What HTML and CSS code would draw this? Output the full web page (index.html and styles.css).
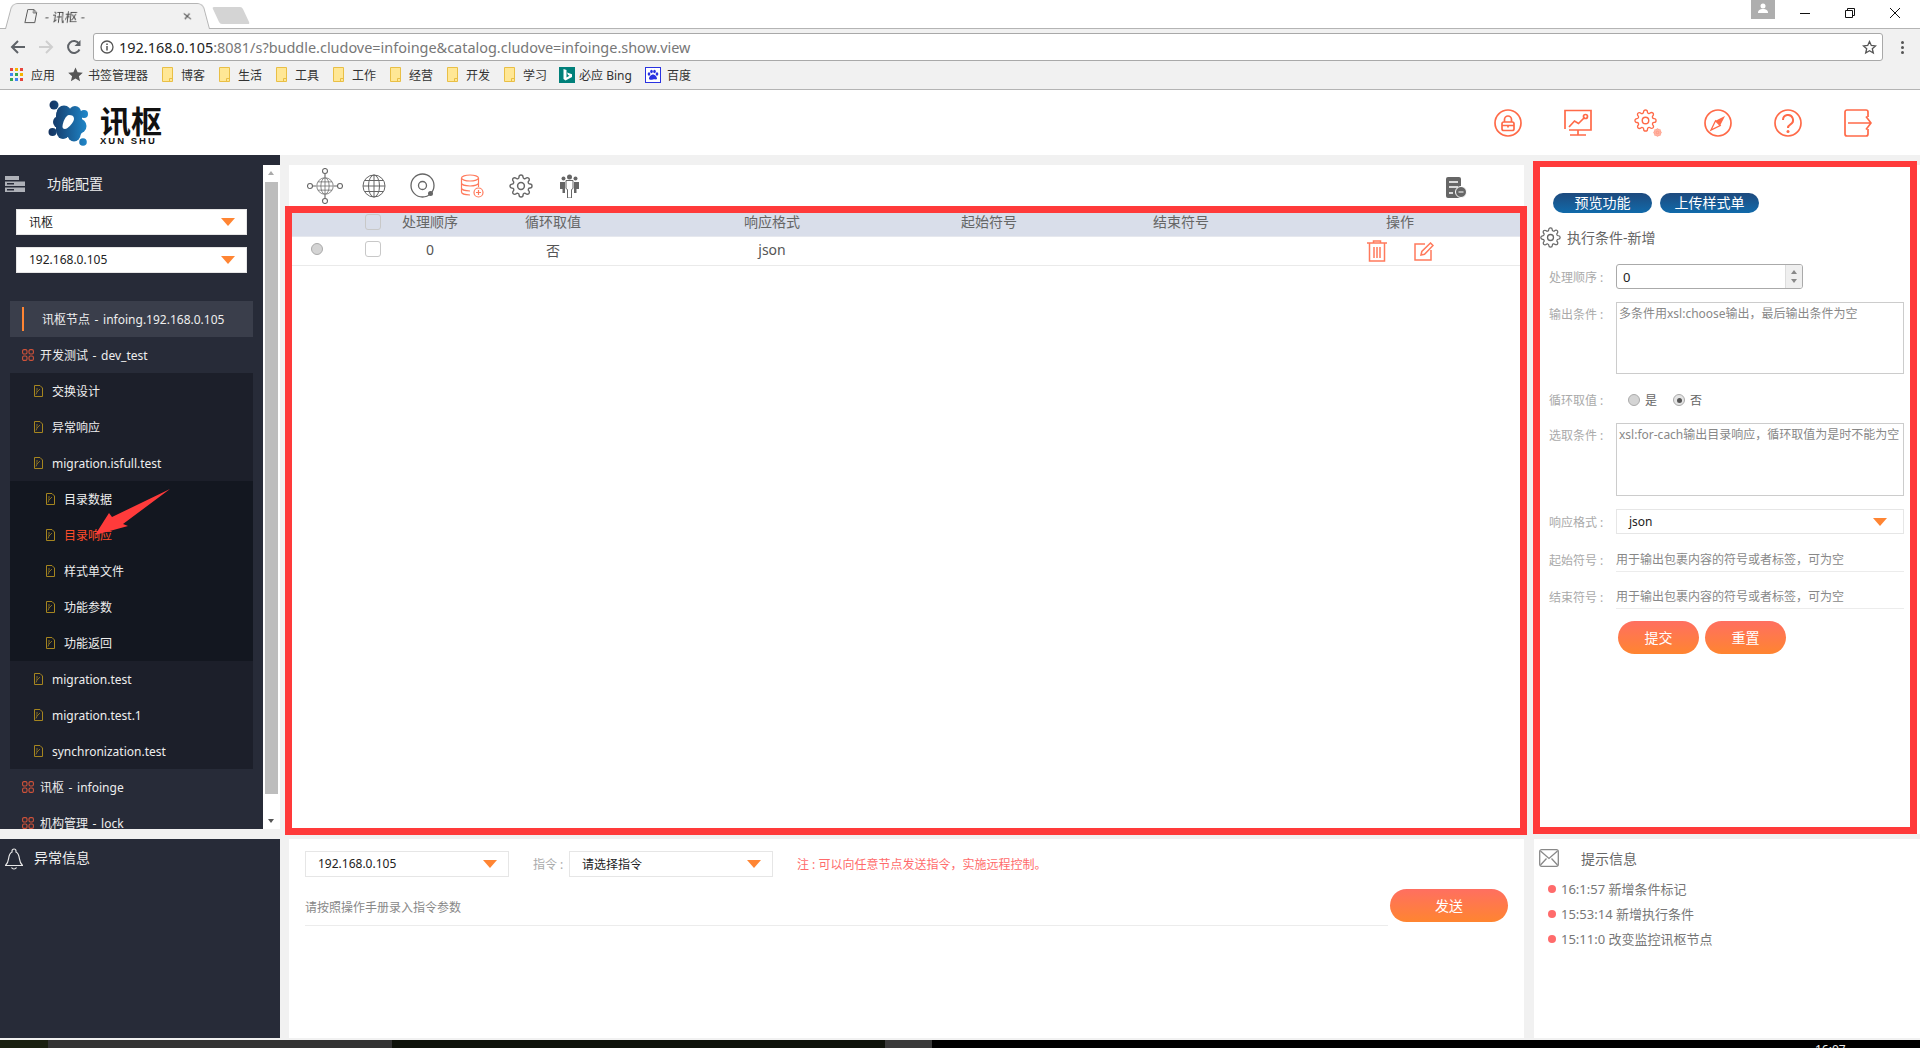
FILE: index.html
```html
<!DOCTYPE html>
<html lang="zh-CN">
<head>
  <meta charset="UTF-8">
  <title>- 讯枢 -</title>
  <link rel="stylesheet" href="styles.css">
</head>
<body>

  <svg class="defs" width="0" height="0">
    <symbol id="gear" viewBox="0 0 24 24">
      <circle cx="12" cy="12" r="3.4" fill="none" stroke="currentColor" stroke-width="1.5"/>
      <path fill="none" stroke="currentColor" stroke-width="1.4" d="M19.4 15a1.65 1.65 0 0 0 .33 1.82l.06.06a2 2 0 0 1 0 2.83 2 2 0 0 1-2.83 0l-.06-.06a1.65 1.65 0 0 0-1.82-.33 1.65 1.65 0 0 0-1 1.51V21a2 2 0 0 1-2 2 2 2 0 0 1-2-2v-.09A1.65 1.65 0 0 0 9 19.4a1.65 1.65 0 0 0-1.82.33l-.06.06a2 2 0 0 1-2.83 0 2 2 0 0 1 0-2.83l.06-.06a1.65 1.65 0 0 0 .33-1.82 1.65 1.65 0 0 0-1.51-1H3a2 2 0 0 1-2-2 2 2 0 0 1 2-2h.09A1.65 1.65 0 0 0 4.6 9a1.65 1.65 0 0 0-.33-1.82l-.06-.06a2 2 0 0 1 0-2.83 2 2 0 0 1 2.83 0l.06.06a1.65 1.65 0 0 0 1.82.33H9a1.65 1.65 0 0 0 1-1.51V3a2 2 0 0 1 2-2 2 2 0 0 1 2 2v.09a1.65 1.65 0 0 0 1 1.51 1.65 1.65 0 0 0 1.82-.33l.06-.06a2 2 0 0 1 2.83 0 2 2 0 0 1 0 2.83l-.06.06a1.65 1.65 0 0 0-.33 1.82V9a1.65 1.65 0 0 0 1.51 1H21a2 2 0 0 1 2 2 2 2 0 0 1-2 2h-.09a1.65 1.65 0 0 0-1.51 1z"/>
    </symbol>
    <symbol id="doc" viewBox="0 0 9 12">
      <path fill="none" stroke="#a5851f" d="M.5.5h5.5l2.5 2.5v8.5h-8z"/>
      <path fill="none" stroke="#a5851f" stroke-width=".8" d="M2 9.5l1-2.5 3-3M2 4h2M2 6h1.5"/>
    </symbol>
    <symbol id="grid" viewBox="0 0 12 12">
      <g fill="none" stroke="#d0523a" stroke-width="1.1">
        <rect x=".6" y=".6" width="4.4" height="4.4" rx="1.4"/>
        <rect x="7" y=".6" width="4.4" height="4.4" rx="1.4"/>
        <rect x=".6" y="7" width="4.4" height="4.4" rx="1.4"/>
        <rect x="7" y="7" width="4.4" height="4.4" rx="1.4"/>
      </g>
    </symbol>
    <symbol id="globe" viewBox="0 0 24 24">
      <g fill="none" stroke="currentColor" stroke-width="1">
        <circle cx="12" cy="12" r="11"/>
        <ellipse cx="12" cy="12" rx="5.5" ry="11"/>
        <path d="M12 1v22M1 12h22M2.6 6.5h18.8M2.6 17.5h18.8"/>
      </g>
    </symbol>
    <symbol id="folder" viewBox="0 0 11 15">
      <path fill="#ffe795" stroke="#e9bf45" d="M.5.5h10v14h-10z"/>
      <path fill="none" stroke="#e9bf45" d="M7.5 14.5v-3h3"/>
    </symbol>
  </svg>

  <div class="browser">
    <div class="tab-strip">
      <div class="tab">
        <svg class="tab-doc" width="11" height="15" viewBox="0 0 11 15"><path fill="none" stroke="#555" d="M.5.5h6.5l3.500 3.500v10.500h-10z M7 .5v3.500h3.500"/></svg>
        <span class="tab-title">- 讯枢 -</span>
        <span class="tab-close">✕</span>
      </div>
      <div class="tab-new"></div>
      <div class="win-buttons">
        <div class="win-user">
          <svg width="10" height="10" viewBox="0 0 10 10"><circle cx="5" cy="3" r="2.500" fill="#fff"/><path fill="#fff" d="M0 10c0-3 2-4 5-4s5 1 5 4z"/></svg>
        </div>
        <svg class="win-icon" width="12" height="12" viewBox="0 0 12 12"><path stroke="#111" d="M1 6.500h10"/></svg>
        <svg class="win-icon" width="12" height="12" viewBox="0 0 12 12"><path fill="none" stroke="#111" d="M1.500 3.500h7v7h-7zM3.500 3.500v-2h7v7h-2"/></svg>
        <svg class="win-icon" width="12" height="12" viewBox="0 0 12 12"><path stroke="#111" d="M1 1l10 10M11 1L1 11"/></svg>
      </div>
    </div>

    <div class="toolbar">
      <svg class="nav-icon" width="16" height="16" viewBox="0 0 16 16"><path fill="none" stroke="#5f6368" stroke-width="2" d="M15 8H2M8 2L2 8l6 6"/></svg>
      <svg class="nav-icon" width="16" height="16" viewBox="0 0 16 16"><path fill="none" stroke="#cfcfcf" stroke-width="2" d="M1 8h13M8 2l6 6-6 6"/></svg>
      <svg class="nav-icon" width="16" height="16" viewBox="0 0 16 16"><path fill="none" stroke="#5f6368" stroke-width="2" d="M13.500 10.500A6 6 0 1 1 13 4.500"/><path fill="#5f6368" d="M14.500 1v6h-6z"/></svg>
      <div class="address">
        <svg width="14" height="14" viewBox="0 0 14 14"><circle cx="7" cy="7" r="6" fill="none" stroke="#555" stroke-width="1.300"/><path stroke="#555" stroke-width="1.500" d="M7 6v4.500M7 3.500v1.500"/></svg>
        <span class="url"><b>192.168.0.105</b>:8081/s?buddle.cludove=infoinge&amp;catalog.cludove=infoinge.show.view</span>
        <svg class="url-star" width="15" height="15" viewBox="0 0 15 15"><path fill="none" stroke="#555" stroke-width="1.300" d="M7.500 1.500l1.800 4 4.200.4-3.200 2.800 1 4.300-3.800-2.300-3.800 2.300 1-4.300L1.500 5.900l4.200-.4z"/></svg>
      </div>
      <div class="menu-dots"><i></i><i></i><i></i></div>
    </div>

    <div class="bookmarks">
      <svg class="bm-apps" width="14" height="14" viewBox="0 0 14 14">
        <rect width="3" height="3" fill="#e8453c"/><rect x="5" width="3" height="3" fill="#f4b400"/><rect x="10" width="3" height="3" fill="#e8453c"/>
        <rect y="5" width="3" height="3" fill="#4285f4"/><rect x="5" y="5" width="3" height="3" fill="#34a853"/><rect x="10" y="5" width="3" height="3" fill="#f4b400"/>
        <rect y="10" width="3" height="3" fill="#34a853"/><rect x="5" y="10" width="3" height="3" fill="#4285f4"/><rect x="10" y="10" width="3" height="3" fill="#e8453c"/>
      </svg>
      <span class="bm-text bm-apps-text">应用</span>
      <svg class="bm-star" width="15" height="15" viewBox="0 0 15 15"><path fill="#555" d="M7.500 .5l2.100 4.800 5.200.5-3.900 3.400 1.200 5.100-4.600-2.700-4.600 2.700 1.200-5.100L.2 5.800l5.200-.5z"/></svg>
      <span class="bm-text bm-manager">书签管理器</span>
      <span class="bm-item"><svg width="11" height="15"><use href="#folder"/></svg><span class="bm-text">博客</span></span>
      <span class="bm-item"><svg width="11" height="15"><use href="#folder"/></svg><span class="bm-text">生活</span></span>
      <span class="bm-item"><svg width="11" height="15"><use href="#folder"/></svg><span class="bm-text">工具</span></span>
      <span class="bm-item"><svg width="11" height="15"><use href="#folder"/></svg><span class="bm-text">工作</span></span>
      <span class="bm-item"><svg width="11" height="15"><use href="#folder"/></svg><span class="bm-text">经营</span></span>
      <span class="bm-item"><svg width="11" height="15"><use href="#folder"/></svg><span class="bm-text">开发</span></span>
      <span class="bm-item"><svg width="11" height="15"><use href="#folder"/></svg><span class="bm-text">学习</span></span>
      <span class="bm-item bm-bing">
        <svg width="16" height="16" viewBox="0 0 16 16"><rect width="16" height="16" fill="#00807a"/><path fill="#fff" d="M4.500 2l3 1v7.500l3-1.800-1.500-.8-1-2.400 5 1.800v2.700l-6.500 3.500-2-1.500z"/></svg>
        <span class="bm-text">必应 Bing</span>
      </span>
      <span class="bm-item bm-baidu">
        <svg width="16" height="16" viewBox="0 0 16 16"><rect x=".5" y=".5" width="15" height="15" fill="#fff" stroke="#2932e1"/><g fill="#2932e1"><ellipse cx="4" cy="7" rx="1.300" ry="1.800"/><ellipse cx="6.500" cy="4.500" rx="1.300" ry="1.800"/><ellipse cx="9.500" cy="4.500" rx="1.300" ry="1.800"/><ellipse cx="12" cy="7" rx="1.300" ry="1.800"/><path d="M8 7.500c-2 0-4 2.500-4 4 0 1.500 2 1.500 4 1s4 .5 4-1c0-1.500-2-4-4-4z"/></g></svg>
        <span class="bm-text">百度</span>
      </span>
    </div>
  </div>

  <header class="header">
    <svg class="logo-mark" width="40" height="46" viewBox="0 0 40 46">
      <defs>
        <linearGradient id="logoFill" gradientUnits="userSpaceOnUse" x1="0" y1="0" x2="40" y2="0">
          <stop offset="0" stop-color="#14305c"/>
          <stop offset="1" stop-color="#1f88cb"/>
        </linearGradient>
      </defs>
      <g fill="url(#logoFill)">
        <circle cx="6" cy="5" r="4.500"/>
        <circle cx="36" cy="14" r="4"/>
        <circle cx="4.500" cy="32" r="4"/>
        <circle cx="35" cy="42" r="3.800"/>
        <circle cx="16" cy="13" r="7.500"/>
        <circle cx="27" cy="12" r="6"/>
        <circle cx="11" cy="22" r="6"/>
        <circle cx="31" cy="26" r="7.500"/>
        <circle cx="15" cy="33" r="6"/>
        <circle cx="26" cy="35" r="6.500"/>
        <rect x="8" y="9" width="26" height="28" rx="6"/>
      </g>
      <path fill="#fff" d="M21 15c3 0 5 1 5 3.500 0 3-3.500 7-6.500 9.500-2 1.500-5 1.500-5-1.500 0-4 3.500-11.500 6.500-11.500z"/>
    </svg>
    <div class="logo-text">
      <div class="logo-cn">讯枢</div>
      <div class="logo-en">XUN SHU</div>
    </div>
    <div class="header-icons">
      <svg width="28" height="28" viewBox="0 0 28 28"><g fill="none" stroke="#ff6a48" stroke-width="1.700"><circle cx="14" cy="14" r="13"/><rect x="8" y="13" width="12" height="8.500" rx="1.800"/><path d="M10.500 13v-2.500a3.500 3.500 0 0 1 7 0V13M14 16v2.500M8 16.500h12"/></g></svg>
      <svg width="28" height="28" viewBox="0 0 28 28"><g fill="none" stroke="#ff6a48" stroke-width="1.700"><path d="M1 20V1.500h26V21H5"/><path d="M5 18l5.500-6 4 2.500 6-6"/><circle cx="21.500" cy="7.500" r="2"/><path d="M14 21v5M6 26h16"/></g></svg>
      <svg class="icon-gear" width="28" height="28" viewBox="0 0 28 28">
        <use href="#gear" x="0" y="0" width="23" height="23"/>
        <circle cx="23.500" cy="23.500" r="3.500" fill="#ffb5a5"/>
        <use class="icon-gear-small" href="#gear" x="19" y="19" width="9" height="9"/>
      </svg>
      <svg width="28" height="28" viewBox="0 0 28 28"><g fill="none" stroke="#ff6a48" stroke-width="1.700"><circle cx="14" cy="14" r="13"/></g><path fill="#ff6a48" d="M21 7l-4.800 9.500-4.700-4.700z"/><path fill="none" stroke="#ff6a48" stroke-width="1.300" d="M7 21l4.500-9.200 4.700 4.700z"/></svg>
      <svg width="28" height="28" viewBox="0 0 28 28"><g fill="none" stroke="#ff6a48" stroke-width="1.700"><circle cx="14" cy="14" r="13"/><path stroke-width="2" d="M9 11a5 5 0 1 1 7.500 4.300c-1.700 1-2.500 1.800-2.500 3.700"/></g><circle cx="14" cy="22.500" r="1.500" fill="#ff6a48"/></svg>
      <svg width="28" height="28" viewBox="0 0 28 28"><g fill="none" stroke="#ff6a48" stroke-width="1.700"><path d="M24 8V3a2 2 0 0 0-2-2H3a2 2 0 0 0-2 2v22a2 2 0 0 0 2 2h19a2 2 0 0 0 2-2v-5"/><path d="M4 14h23M22 7.500l5 6.500-5 6.500"/></g></svg>
    </div>
  </header>

  <div class="main">
    <aside class="sidebar">
      <div class="side-top">
        <div class="side-nav">
          <div class="side-head">
            <svg width="20" height="16" viewBox="0 0 20 16"><g fill="#aeb1b8"><rect y="0" width="14" height="4"/><rect y="5.500" width="20" height="4.500"/><rect y="11.500" width="20" height="4.500"/></g><g fill="#272b38"><rect x="2" y="7" width="7" height="1.500"/><rect x="2" y="13" width="7" height="1.500"/></g></svg>
            <span>功能配置</span>
          </div>
          <div class="select side-select"><span>讯枢</span><i class="caret"></i></div>
          <div class="select side-select"><span>192.168.0.105</span><i class="caret"></i></div>

          <div class="tree">
            <div class="tree-item active"><i class="active-bar"></i><span>讯枢节点 - infoing.192.168.0.105</span></div>
            <div class="tree-item"><svg width="12" height="12"><use href="#grid"/></svg><span>开发测试 - dev_test</span></div>
            <div class="tree-level2">
              <div class="tree-item"><svg width="9" height="12"><use href="#doc"/></svg><span>交换设计</span></div>
              <div class="tree-item"><svg width="9" height="12"><use href="#doc"/></svg><span>异常响应</span></div>
              <div class="tree-item"><svg width="9" height="12"><use href="#doc"/></svg><span>migration.isfull.test</span></div>
              <div class="tree-level3">
                <div class="tree-item"><svg width="9" height="12"><use href="#doc"/></svg><span>目录数据</span></div>
                <div class="tree-item current"><svg width="9" height="12"><use href="#doc"/></svg><span>目录响应</span></div>
                <div class="tree-item"><svg width="9" height="12"><use href="#doc"/></svg><span>样式单文件</span></div>
                <div class="tree-item"><svg width="9" height="12"><use href="#doc"/></svg><span>功能参数</span></div>
                <div class="tree-item"><svg width="9" height="12"><use href="#doc"/></svg><span>功能返回</span></div>
              </div>
              <div class="tree-item"><svg width="9" height="12"><use href="#doc"/></svg><span>migration.test</span></div>
              <div class="tree-item"><svg width="9" height="12"><use href="#doc"/></svg><span>migration.test.1</span></div>
              <div class="tree-item"><svg width="9" height="12"><use href="#doc"/></svg><span>synchronization.test</span></div>
            </div>
            <div class="tree-item"><svg width="12" height="12"><use href="#grid"/></svg><span>讯枢 - infoinge</span></div>
            <div class="tree-item"><svg width="12" height="12"><use href="#grid"/></svg><span>机构管理 - lock</span></div>
          </div>
        </div>
        <div class="scrollbar">
          <i class="scroll-up"></i>
          <div class="scroll-thumb"></div>
          <i class="scroll-down"></i>
        </div>
        <!-- annotation arrow drawn over the tree -->
        <svg class="mark-arrow" width="75" height="50" viewBox="0 0 75 50">
          <path fill="#ff3b3b" d="M74 2L27 37l5 2-33 9 14-22 3 4z"/>
        </svg>
      </div>
      <div class="side-alert">
        <svg width="18" height="22" viewBox="0 0 18 22"><path fill="none" stroke="#e8e8e8" stroke-width="1.200" d="M9 1a2 2 0 0 1 2 2v1c2.500 1 3 3.500 3.500 7 .3 2.500 1.500 5 3 6.500H.500c1.500-1.500 2.700-4 3-6.500.5-3.500 1-6 3.500-7V3a2 2 0 0 1 2-2zM6.500 19.500c.5 1 1.500 1.500 2.500 1.500s2-.5 2.500-1.500"/></svg>
        <span>异常信息</span>
      </div>
    </aside>

    <section class="center">
      <div class="func-bar">
        <span class="func-slot">
          <svg width="36" height="36" viewBox="0 0 36 36">
            <use href="#globe" x="9" y="9" width="18" height="18"/>
            <g fill="none" stroke="currentColor" stroke-width="1.100">
              <circle cx="18" cy="3" r="2.500"/><circle cx="18" cy="33" r="2.500"/><circle cx="3" cy="18" r="2.500"/><circle cx="33" cy="18" r="2.500"/>
              <path d="M18 5.500V9M18 27v3.500M5.500 18H9M27 18h3.500"/>
            </g>
          </svg>
        </span>
        <span class="func-slot"><svg width="24" height="24"><use href="#globe"/></svg></span>
        <span class="func-slot">
          <svg width="25" height="25" viewBox="0 0 25 25"><g fill="none" stroke="currentColor" stroke-width="1.300"><circle cx="12.500" cy="12.500" r="11.500"/><circle cx="12.500" cy="12.500" r="4"/></g><circle cx="20.500" cy="20.500" r="2.500" fill="currentColor"/></svg>
        </span>
        <span class="func-slot func-on">
          <svg width="24" height="24" viewBox="0 0 24 24"><g fill="none" stroke="#ff7a5c" stroke-width="1.200"><ellipse cx="10" cy="4" rx="8.500" ry="3"/><path d="M1.500 4v14c0 1.700 3.800 3 8.500 3M1.500 9c0 1.700 3.800 3 8.500 3s8.500-1.300 8.500-3M1.500 14c0 1.700 3.800 3 8.500 3M18.500 4v9"/><circle cx="18.500" cy="18.500" r="4.500"/><path d="M18.500 16v5M16 18.500h5"/></g></svg>
        </span>
        <span class="func-slot"><svg width="24" height="24"><use href="#gear"/></svg></span>
        <span class="func-slot">
          <svg width="19" height="24" viewBox="0 0 19 24"><g fill="currentColor"><circle cx="9.500" cy="3" r="2.500"/><circle cx="3.500" cy="4.500" r="2"/><circle cx="15.500" cy="4.500" r="2"/><path d="M0 8h5v11H2.500v-4H0zM19 8h-5v11h2.500v-4H19z"/><path d="M6 6.500h7v8l-1.500 1V24h-4v-8.500L6 14.500z" fill="none" stroke="currentColor"/></g></svg>
        </span>
        <span class="func-right">
          <svg width="21" height="21" viewBox="0 0 21 21"><path fill="#666" d="M2 0h11a2 2 0 0 1 2 2v19H2a2 2 0 0 1-2-2V2a2 2 0 0 1 2-2z"/><path stroke="#fff" stroke-width="1.500" d="M3 5h9M3 10h9M3 16h4"/><circle cx="15" cy="15" r="5.500" fill="#666" stroke="#fff"/><path stroke="#fff" d="M12.500 15h5"/></svg>
        </span>
      </div>

      <div class="mark-box table-box">
        <table class="data-table">
          <colgroup>
            <col class="col-radio"><col class="col-check"><col class="col-order"><col class="col-loop">
            <col class="col-format"><col class="col-start"><col class="col-end"><col class="col-ops"><col class="col-rest">
          </colgroup>
          <thead>
            <tr>
              <th></th>
              <th><span class="check"></span></th>
              <th>处理顺序</th>
              <th>循环取值</th>
              <th>响应格式</th>
              <th>起始符号</th>
              <th>结束符号</th>
              <th>操作</th>
              <th></th>
            </tr>
          </thead>
          <tbody>
            <tr>
              <td class="cell-radio"><span class="radio"></span></td>
              <td class="cell-check"><span class="check"></span></td>
              <td>0</td>
              <td>否</td>
              <td>json</td>
              <td></td>
              <td></td>
              <td class="cell-ops">
                <svg width="20" height="22" viewBox="0 0 20 22"><g fill="none" stroke="#ff7a5c" stroke-width="1.500"><path d="M0 3h20M6.500 3V1h7v2M2.500 3v18h15V3M7 7v11M10 7v11M13 7v11"/></g></svg>
                <svg width="20" height="19" viewBox="0 0 20 19"><g fill="none" stroke="#ff7a5c" stroke-width="1.500"><path d="M11 2H1v16h16V8"/><path d="M7 13l.8-3.500L16.500 1l2.500 2.500-8.500 8.700z"/></g></svg>
              </td>
              <td></td>
            </tr>
          </tbody>
        </table>
      </div>

      <div class="command">
        <div class="command-row">
          <div class="select"><span>192.168.0.105</span><i class="caret"></i></div>
          <label class="command-label">指令 :</label>
          <div class="select"><span>请选择指令</span><i class="caret"></i></div>
          <span class="command-note">注 : 可以向任意节点发送指令，实施远程控制。</span>
        </div>
        <div class="command-row command-send">
          <input class="line-input" type="text" placeholder="请按照操作手册录入指令参数">
          <button type="button" class="btn-orange send-btn"><span>发送</span></button>
        </div>
      </div>
    </section>

    <section class="right">
      <div class="mark-box form-box">
        <div class="form-actions">
          <button type="button" class="btn-blue">预览功能</button>
          <button type="button" class="btn-blue">上传样式单</button>
        </div>
        <div class="form-title">
          <svg width="21" height="21"><use href="#gear"/></svg>
          <span>执行条件-新增</span>
        </div>
        <form class="cond-form">
          <div class="form-row">
            <label>处理顺序 :</label>
            <div class="number">
              <span>0</span>
              <div class="spin"><i class="spin-up"></i><i class="spin-down"></i></div>
            </div>
          </div>
          <div class="form-row row-top">
            <label>输出条件 :</label>
            <textarea class="area" placeholder="多条件用xsl:choose输出，最后输出条件为空"></textarea>
          </div>
          <div class="form-row row-radio">
            <label>循环取值 :</label>
            <span class="radio"></span><span class="radio-text">是</span>
            <span class="radio radio-on"></span><span class="radio-text">否</span>
          </div>
          <div class="form-row row-top row-area2">
            <label>选取条件 :</label>
            <textarea class="area" placeholder="xsl:for-cach输出目录响应，循环取值为是时不能为空"></textarea>
          </div>
          <div class="form-row">
            <label>响应格式 :</label>
            <div class="select form-select"><span>json</span><i class="caret"></i></div>
          </div>
          <div class="form-row">
            <label>起始符号 :</label>
            <input class="line-input" type="text" placeholder="用于输出包裹内容的符号或者标签，可为空">
          </div>
          <div class="form-row row-tight">
            <label>结束符号 :</label>
            <input class="line-input" type="text" placeholder="用于输出包裹内容的符号或者标签，可为空">
          </div>
          <div class="form-buttons">
            <button type="button" class="btn-orange"><span>提交</span></button>
            <button type="button" class="btn-orange"><span>重置</span></button>
          </div>
        </form>
      </div>

      <div class="notices">
        <div class="notices-head">
          <svg width="20" height="18" viewBox="0 0 20 18"><g fill="none" stroke="#888" stroke-width="1.300"><rect x=".7" y=".7" width="18.600" height="16.600" rx="2"/><path d="M1.500 2l8.500 7.500L18.500 2M1.500 16l6-6.500M18.500 16l-6-6.500"/></g></svg>
          <span>提示信息</span>
        </div>
        <ul class="notice-list">
          <li>16:1:57 新增条件标记</li>
          <li>15:53:14 新增执行条件</li>
          <li>15:11:0 改变监控讯枢节点</li>
        </ul>
      </div>
    </section>
  </div>

  <div class="taskbar">
    <i class="task-a"></i><i class="task-b"></i><i class="task-c"></i><i class="task-d"></i>
    <span class="task-time">16:07</span>
  </div>

</body>
</html>
```

FILE: styles.css
```css
* {
  box-sizing: border-box;
}

html, body {
  margin: 0;
  height: 1048px;
  overflow: hidden;
}

body {
  width: 1920px;
  display: flex;
  flex-direction: column;
  background-color: #f1f1f1;
  font-family: "Noto Sans", "Noto Sans CJK SC", sans-serif;
  font-size: 12px;
  color: #555;
}

.defs {
  position: absolute;
}

svg {
  display: block;
  flex: none;
}

/* browser frame */
.browser {
  height: 90px;
  flex: none;
  background-color: #f1f1f1;
  border-bottom: 1px solid #b4b4b4;
}

.tab-strip {
  height: 29px;
  display: flex;
  align-items: flex-end;
  background-color: #fff;
  border-bottom: 1px solid #b4b4b4;
  position: relative;
}

.tab {
  width: 205px;
  height: 28px;
  margin-left: 5px;
  margin-bottom: -1px;
  padding: 0 14px 0 17px;
  display: flex;
  align-items: center;
  background-color: #f1f1f1;
  border: 1px solid #b4b4b4;
  border-bottom: 0;
  border-radius: 6px 6px 0 0;
  transform: perspective(40px) rotateX(6deg);
  transform-origin: bottom;
}

.tab-doc {
  margin-right: 9px;
}

.tab-title {
  font-size: 13px;
  color: #444;
  flex: 1;
}

.tab-close {
  font-size: 12px;
  color: #555;
}

.tab-new {
  width: 30px;
  height: 17px;
  margin: 0 0 4px 6px;
  background-color: #d4d4d4;
  border-radius: 2px;
  transform: skewX(25deg);
}

.win-buttons {
  margin-left: auto;
  height: 28px;
  display: flex;
  align-self: flex-start;
  padding-right: 2px;
}

.win-user {
  width: 24px;
  height: 19px;
  margin-right: 8px;
  background-color: #aeaeae;
  display: flex;
  justify-content: center;
  padding-top: 3px;
}

.win-icon {
  margin: 7px 17px 0 16px;
}

.toolbar {
  height: 31px;
  padding: 4px 0 0 10px;
  display: flex;
  align-items: flex-start;
}

.nav-icon {
  margin: 6px 12px 0 0;
}

.address {
  width: 1790px;
  height: 28px;
  margin-left: -1px;
  padding: 0 5px 0 6px;
  display: flex;
  align-items: center;
  background-color: #fff;
  border: 1px solid #a9a9a9;
  border-radius: 3px;
}

.url {
  margin-left: 5px;
  font-size: 14.450px;
  color: #777;
  white-space: nowrap;
}

.url b {
  font-weight: 400;
  color: #222;
}

.url-star {
  margin-left: auto;
}

.menu-dots {
  margin: 8px 0 0 18px;
  display: flex;
  flex-direction: column;
  gap: 2px;
}

.menu-dots i {
  width: 3px;
  height: 3px;
  background-color: #555;
  border-radius: 50%;
}

.bookmarks {
  height: 29px;
  padding-left: 10px;
  display: flex;
  align-items: center;
}

.bm-text {
  font-size: 12px;
  color: #333;
  white-space: nowrap;
}

.bm-apps-text {
  margin-left: 7px;
}

.bm-star {
  margin-left: 13px;
}

.bm-manager {
  margin: 0 14px 0 5px;
}

.bm-item {
  width: 57px;
  display: flex;
  align-items: center;
  gap: 8px;
}

.bm-bing {
  width: 86px;
  margin-left: -2px;
  gap: 4px;
}

.bm-baidu {
  gap: 6px;
}

/* page header */
.header {
  height: 65px;
  flex: none;
  padding-left: 48px;
  display: flex;
  align-items: center;
  background-color: #fff;
}

.logo-text {
  margin: 6px 0 0 12px;
  color: #111;
}

.logo-cn {
  font-size: 31px;
  font-weight: 700;
  line-height: 29px;
}

.logo-en {
  font-family: "Liberation Sans", sans-serif;
  font-size: 9.500px;
  font-weight: 700;
  line-height: 9px;
  letter-spacing: 2px;
}

.header-icons {
  margin-left: auto;
  padding-right: 48px;
  display: flex;
  gap: 42px;
}

.icon-gear {
  color: #ff6a48;
}

.icon-gear-small {
  color: #ff8a70;
}

/* layout */
.main {
  height: 885px;
  flex: none;
  display: grid;
  grid-template-columns: 280px 1242px 385px;
  column-gap: 5px;
}

.main > .right {
  margin-left: 1px;
  width: 387px;
}

/* sidebar */
.sidebar {
  display: flex;
  flex-direction: column;
}

.side-top {
  height: 674px;
  display: flex;
  background-color: #272b38;
  overflow: hidden;
  position: relative;
}

.side-nav {
  width: 263px;
  flex: none;
}

.side-head {
  height: 40px;
  margin: 9px 0 5px;
  padding-left: 5px;
  display: flex;
  align-items: center;
  gap: 22px;
  font-size: 14px;
  color: #eee;
}

.side-head span {
  margin-bottom: 3px;
}

.select {
  width: 204px;
  height: 26px;
  flex: none;
  padding: 0 11px 0 12px;
  display: flex;
  align-items: center;
  justify-content: space-between;
  background-color: #fff;
  border: 1px solid #e6e6e6;
  font-size: 12px;
  color: #222;
}

.select span {
  margin-bottom: 1px;
}

.caret {
  width: 0;
  height: 0;
  border-left: 7.500px solid transparent;
  border-right: 7.500px solid transparent;
  border-top: 8px solid #ff8533;
}

.side-select {
  width: 231px;
  margin: 0 16px 12px;
}

.tree {
  margin: 28px 10px 0;
  font-size: 12px;
  word-spacing: 1.500px;
  color: #eee;
}

.tree-item {
  height: 36px;
  padding-left: 12px;
  display: flex;
  align-items: center;
  gap: 6px;
  white-space: nowrap;
}

.tree-item.active {
  background-color: #3a3e4b;
}

.active-bar {
  width: 2px;
  height: 24px;
  margin-right: 12px;
  background-color: #ff8533;
}

.tree-level2 {
  background-color: #1c1f2a;
}

.tree-level2 .tree-item {
  padding-left: 24px;
  gap: 9px;
}

.tree-level3 {
  background-color: #131720;
}

.tree-level2 .tree-level3 .tree-item {
  padding-left: 36px;
}

.tree-item.current {
  color: #ff4d2a;
}

.scrollbar {
  width: 17px;
  margin-top: 10px;
  background-color: #fff;
  position: relative;
  padding: 17px 2px 0;
}

.scroll-thumb {
  width: 13px;
  height: 612px;
  background-color: #bdbdbd;
}

.scroll-up,
.scroll-down {
  position: absolute;
  left: 5px;
  width: 0;
  height: 0;
  border-left: 3.500px solid transparent;
  border-right: 3.500px solid transparent;
}

.scroll-up {
  top: 6px;
  border-bottom: 4px solid #aaa;
}

.scroll-down {
  bottom: 6px;
  border-top: 4px solid #555;
}

.mark-arrow {
  position: absolute;
  left: 96px;
  top: 332px;
}

.side-alert {
  height: 199px;
  margin-top: 10px;
  padding: 9px 0 0 5px;
  display: flex;
  align-items: flex-start;
  gap: 11px;
  background-color: #272b38;
  font-size: 14px;
  line-height: 20px;
  color: #eee;
}

/* centre column */
.center {
  display: flex;
  flex-direction: column;
  padding-top: 10px;
}

.func-bar {
  height: 41px;
  margin: 0 3px 0 4px;
  padding-left: 11px;
  display: flex;
  align-items: center;
  background-color: #fff;
  color: #666;
}

.func-slot {
  width: 49px;
  display: flex;
  justify-content: center;
}

.func-right {
  margin: 3px 57px 0 auto;
}

.mark-box {
  border: 7px solid #ff3a3a;
  background-color: #fff;
}

.table-box {
  height: 629px;
}

.data-table {
  width: 100%;
  table-layout: fixed;
  border-collapse: collapse;
  font-size: 14px;
}

.col-radio { width: 58px; }
.col-check { width: 46px; }
.col-order { width: 68px; }
.col-loop { width: 178px; }
.col-format { width: 260px; }
.col-start { width: 174px; }
.col-end { width: 210px; }
.col-ops { width: 228px; }

.data-table th {
  height: 23px;
  padding: 0 0 5px;
  background-color: #d9deea;
  border-bottom: 1px solid #e6e8ee;
  font-weight: 400;
  color: #666;
  line-height: 17px;
}

.data-table td {
  height: 29px;
  padding: 0 0 2px;
  text-align: center;
  border-bottom: 1px solid #eaeaea;
  color: #555;
}

.data-table .cell-radio {
  padding-right: 8px;
}

.cell-radio .radio {
  margin-bottom: 4px;
}

.check {
  width: 16px;
  height: 16px;
  display: inline-block;
  vertical-align: top;
  background-color: #fff;
  border: 1px solid #c8c8c8;
  border-radius: 3px;
}

.data-table th .check {
  background-color: #d9deea;
  margin-top: 1px;
}

.data-table .cell-check {
  padding: 0 0 1px;
}

.radio {
  width: 12px;
  height: 12px;
  display: inline-block;
  vertical-align: middle;
  background-color: #d4d4d4;
  border: 1px solid #aaa;
  border-radius: 50%;
}

.radio-on {
  background-color: #e4e4e4;
  position: relative;
}

.radio-on::after {
  content: "";
  position: absolute;
  left: 2.500px;
  top: 2.500px;
  width: 5px;
  height: 5px;
  background-color: #555;
  border-radius: 50%;
}

.data-table .cell-ops {
  display: flex;
  justify-content: center;
  align-items: center;
  gap: 27px;
  padding: 1px 0 0 1px;
}

.command {
  height: 199px;
  margin: 4px 3px 0 4px;
  padding: 12px 16px;
  background-color: #fff;
}

.command-row {
  display: flex;
  align-items: center;
}

.command-label {
  width: 36px;
  margin-left: 24px;
  color: #aaa;
}

.command-note {
  margin-left: 24px;
  color: #ff6b6b;
  white-space: nowrap;
}

.command-send {
  margin-top: 12px;
  align-items: flex-start;
}

.line-input {
  flex: 1;
  height: 25px;
  padding: 0;
  border: 0;
  border-bottom: 1px solid #ececec;
  outline: none;
  font-family: inherit;
  font-size: 12px;
  background: transparent;
}

.line-input::placeholder {
  color: #888;
  opacity: 1;
}

.command-send .line-input {
  height: 37px;
  flex: none;
  width: 1083px;
}

.btn-orange {
  width: 81px;
  height: 33px;
  padding: 0;
  border: 0;
  border-radius: 17px;
  background: linear-gradient(#ff6f61, #ff8530);
  color: #fff;
  font-family: inherit;
  font-size: 14px;
}

.btn-orange span {
  display: block;
  margin-bottom: 2px;
}

.send-btn {
  width: 118px;
  margin-left: 2px;
}

.btn-blue {
  width: 99px;
  height: 20px;
  padding: 0;
  border: 0;
  border-radius: 10px;
  background: linear-gradient(#1e4a7e, #116aaa);
  color: #fff;
  font-family: inherit;
  font-size: 14px;
  line-height: 20px;
}

/* right column */
.right {
  display: flex;
  flex-direction: column;
  background: linear-gradient(#f1f1f1 10px, #fff 10px, #fff 679px, #f1f1f1 679px);
}

.form-box {
  width: 384px;
  height: 673px;
  margin-top: 6px;
  border-top-width: 6px;
  padding: 26px 6px 0 0;
}

.form-actions {
  margin-left: 13px;
  display: flex;
  gap: 8px;
}

.form-title {
  height: 21px;
  margin-top: 14px;
  display: flex;
  align-items: center;
  gap: 6px;
  font-size: 14px;
  color: #666;
}

.form-title span {
  margin-bottom: 2px;
}

.form-title svg {
  color: #666;
}

.cond-form {
  padding-left: 9px;
}

.form-row {
  margin-top: 13px;
  display: flex;
  align-items: center;
}

.form-row:first-child {
  margin-top: 16px;
}

.form-row label {
  width: 67px;
  flex: none;
  color: #aaa;
}

.row-top {
  align-items: flex-start;
}

.row-top label {
  padding-top: 3px;
}

.number {
  width: 187px;
  height: 25px;
  padding-left: 6px;
  display: flex;
  align-items: center;
  justify-content: space-between;
  border: 1px solid #aaa;
  border-radius: 3px;
  font-size: 13px;
  color: #222;
  overflow: hidden;
}

.spin {
  width: 17px;
  height: 100%;
  background-color: #efefef;
  border-left: 1px solid #ddd;
  display: flex;
  flex-direction: column;
  align-items: center;
  justify-content: center;
  gap: 5px;
}

.spin i {
  width: 0;
  height: 0;
  border-left: 3.500px solid transparent;
  border-right: 3.500px solid transparent;
}

.spin-up {
  border-bottom: 4px solid #888;
}

.spin-down {
  border-top: 4px solid #888;
}

.area {
  width: 288px;
  height: 72px;
  padding: 2px;
  display: block;
  border: 1px solid #ccc;
  border-radius: 0;
  outline: none;
  resize: none;
  font-family: inherit;
  font-size: 12px;
  line-height: 18px;
}

.area::placeholder {
  color: #888;
  opacity: 1;
}

.row-area2 .area {
  height: 73px;
  overflow: hidden;
}

.row-radio {
  height: 20px;
  margin-top: 16px;
}

.row-radio .radio {
  margin-left: 12px;
}

.row-radio .radio-on {
  margin-left: 16px;
}

.radio-text {
  margin-left: 5px;
  color: #666;
}

.form-select {
  width: 288px;
  height: 25px;
  padding-right: 16px;
}

.row-tight {
  margin-top: 12px;
}

.form-buttons {
  margin: 12px 0 0 69px;
  display: flex;
  gap: 6px;
}

.notices {
  height: 199px;
  margin-top: 5px;
  margin-left: 1px;
  padding: 9px 0 0 5px;
  background-color: #fff;
}

.notices-head {
  display: flex;
  align-items: center;
  gap: 22px;
  font-size: 14px;
  color: #666;
}

.notice-list {
  margin: 8px 0 0;
  padding: 0 0 0 9px;
  list-style: none;
  font-size: 13px;
  color: #777;
}

.notice-list li {
  height: 25px;
  display: flex;
  align-items: center;
  gap: 5px;
}

.notice-list li::before {
  content: "";
  width: 8px;
  height: 8px;
  background-color: #ff6b6b;
  border-radius: 50%;
}

/* desktop taskbar, mostly cut off */
.taskbar {
  height: 8px;
  flex: none;
  display: flex;
  background-color: #000;
  overflow: hidden;
  position: relative;
}

.task-a { width: 48px; background-color: #1a2010; }
.task-b { width: 344px; background-color: #333; }
.task-c { width: 493px; background-color: #0e120a; }
.task-d { width: 47px; background-color: #3a3a3a; }

.task-time {
  position: absolute;
  left: 1815px;
  top: 3px;
  font-size: 12px;
  line-height: 14px;
  color: #eee;
}
```
